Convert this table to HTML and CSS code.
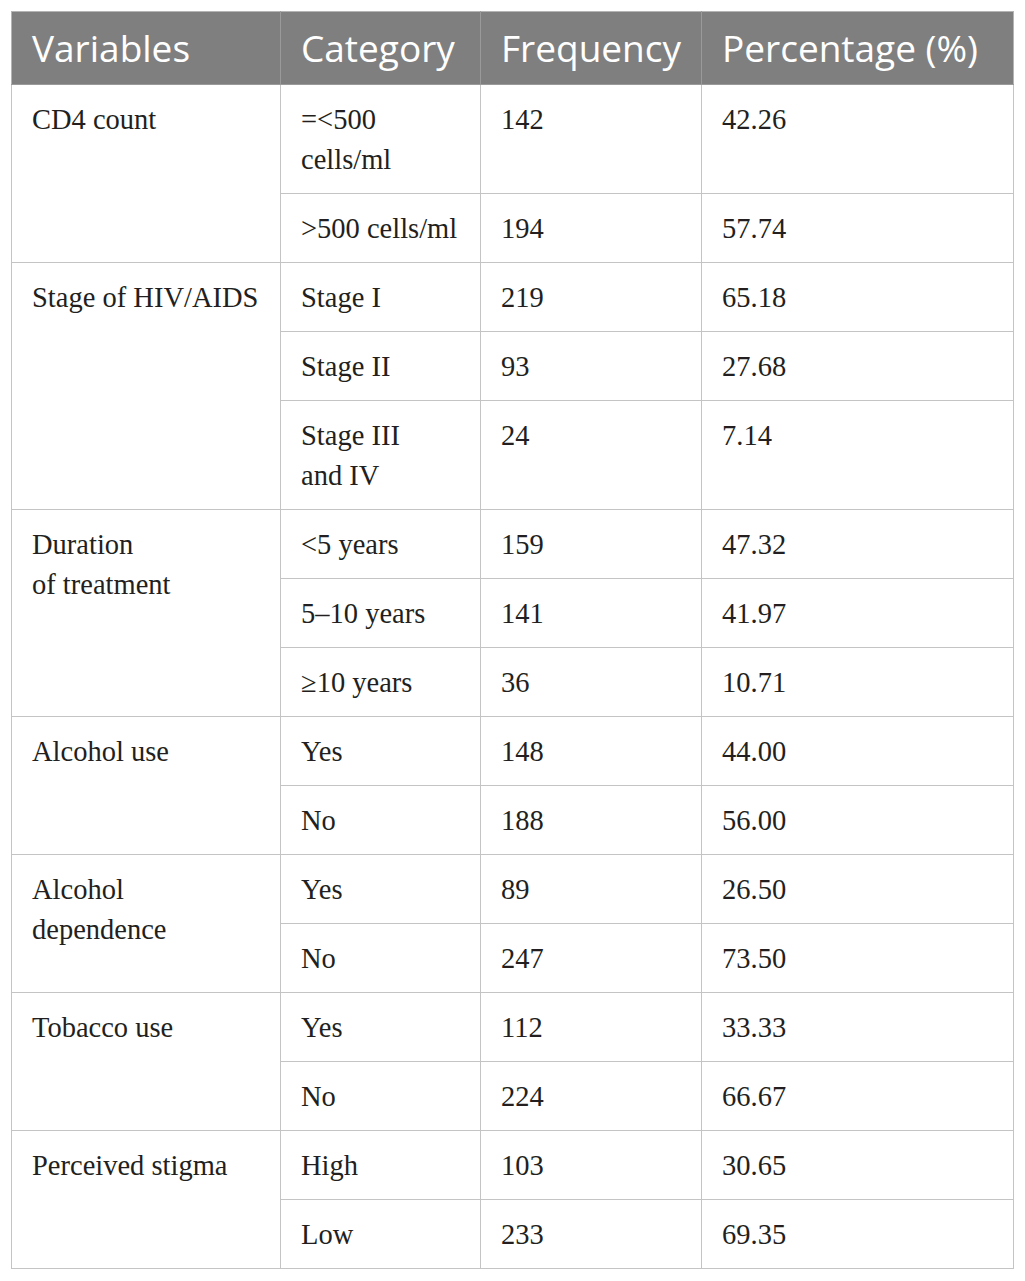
FILE: index.html
```html
<!DOCTYPE html>
<html lang="en">
<head>
  <meta charset="UTF-8" />
  <title>Clinical and behavioral characteristics</title>
  <link rel="stylesheet" href="styles.css">
</head>
<body>
  <table class="data-table">
    <colgroup>
      <col class="col-var">
      <col class="col-cat">
      <col class="col-freq">
      <col class="col-pct">
    </colgroup>
    <thead>
      <tr>
        <th>Variables</th>
        <th>Category</th>
        <th>Frequency</th>
        <th>Percentage (%)</th>
      </tr>
    </thead>
    <tbody>
      <tr><td rowspan="2">CD4 count</td><td>=&lt;500<br>cells/ml</td><td>142</td><td>42.26</td></tr>
      <tr><td>&gt;500 cells/ml</td><td>194</td><td>57.74</td></tr>

      <tr><td rowspan="3">Stage of HIV/AIDS</td><td>Stage I</td><td>219</td><td>65.18</td></tr>
      <tr><td>Stage II</td><td>93</td><td>27.68</td></tr>
      <tr><td>Stage III<br>and IV</td><td>24</td><td>7.14</td></tr>

      <tr><td rowspan="3">Duration<br>of treatment</td><td>&lt;5 years</td><td>159</td><td>47.32</td></tr>
      <tr><td>5–10 years</td><td>141</td><td>41.97</td></tr>
      <tr><td>≥10 years</td><td>36</td><td>10.71</td></tr>

      <tr><td rowspan="2">Alcohol use</td><td>Yes</td><td>148</td><td>44.00</td></tr>
      <tr><td>No</td><td>188</td><td>56.00</td></tr>

      <tr><td rowspan="2">Alcohol<br>dependence</td><td>Yes</td><td>89</td><td>26.50</td></tr>
      <tr><td>No</td><td>247</td><td>73.50</td></tr>

      <tr><td rowspan="2">Tobacco use</td><td>Yes</td><td>112</td><td>33.33</td></tr>
      <tr><td>No</td><td>224</td><td>66.67</td></tr>

      <tr><td rowspan="2">Perceived stigma</td><td>High</td><td>103</td><td>30.65</td></tr>
      <tr><td>Low</td><td>233</td><td>69.35</td></tr>
    </tbody>
  </table>
</body>
</html>
```

FILE: styles.css
```css
* { box-sizing: border-box; }
body {
  margin: 0;
  padding: 11px;
  background: #fff;
}
.data-table {
  width: 1002px;
  border-collapse: collapse;
  table-layout: fixed;
  font-family: "Liberation Serif", "Times New Roman", serif;
  font-size: 28.5px;
  line-height: 40px;
  color: #231f20;
}
.col-var { width: 269px; }
.col-cat { width: 200px; }
.col-freq { width: 221px; }
.col-pct { width: 312px; }
.data-table th {
  background: #7f7f7f;
  color: #fff;
  font-family: "Open Sans", "Liberation Sans", sans-serif;
  font-weight: normal;
  font-size: 37px;
  line-height: 44px;
  text-align: left;
  padding: 14px 18px 14px 20px;
  border: 1px solid #9a9a9a;
  border-top-color: #b4b4b4;
}
.data-table th:first-child { border-left-color: #b4b4b4; }
.data-table th:last-child { border-right-color: #b4b4b4; }
.data-table td {
  padding: 15px 18px 13px 20px;
  border: 1px solid #c4c4c4;
  vertical-align: top;
  text-align: left;
}
```
